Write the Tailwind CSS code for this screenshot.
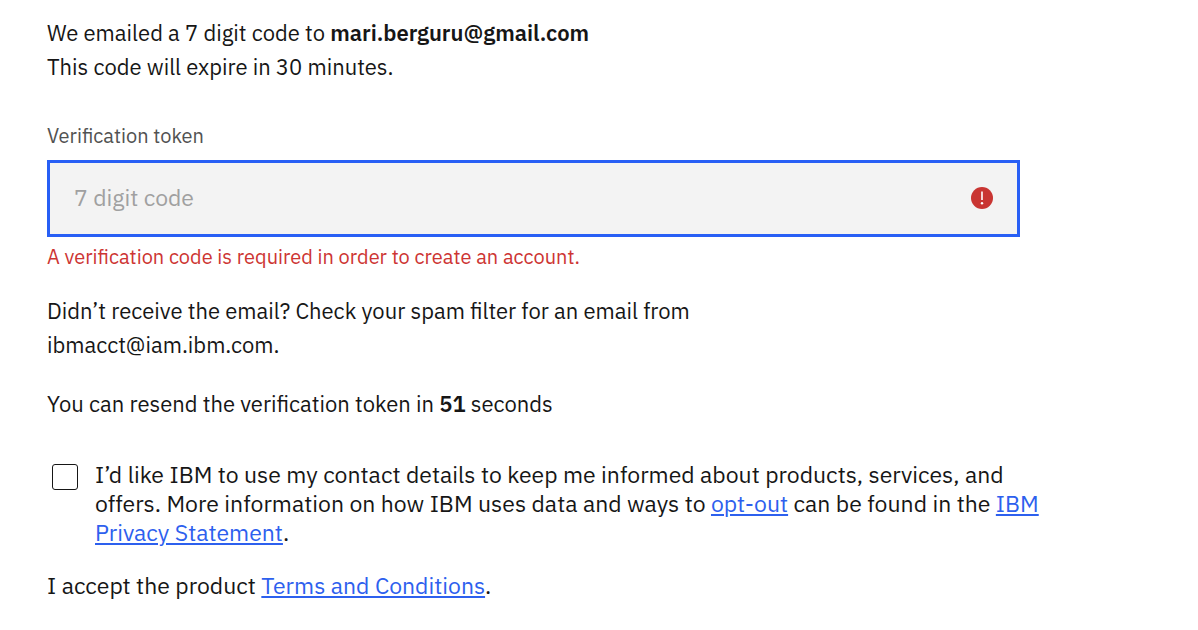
<!DOCTYPE html>
<html lang="en">
<head>
<meta charset="utf-8">
<title>Verify email</title>
<script src="https://cdn.jsdelivr.net/npm/@tailwindcss/browser@4"></script>
</head>
<body class="bg-white text-[#161616] font-['IBM_Plex_Sans','Noto_Sans',sans-serif] text-[22px]">
<main class="px-[47px] pt-4">
  <p class="leading-[34px]">We emailed a 7 digit code to <strong class="font-semibold">mari.berguru@gmail.com</strong><br>This code will expire in 30 minutes.</p>
  <form novalidate>
    <div class="mt-10 max-w-[973px]">
      <label for="token" class="block text-[20px] leading-6 text-[#525252]">Verification token</label>
      <div class="relative mt-3">
        <input id="token" type="text" placeholder="7 digit code" aria-invalid="true" aria-describedby="token-error" class="block h-[77px] w-full border-[3px] border-[#285ff5] bg-[#f3f3f3] px-6 pb-1 text-[23px] outline-none placeholder:text-[#a0a0a0]">
        <svg class="absolute top-[27px] right-[27px]" width="22" height="22" viewBox="0 0 22 22" aria-hidden="true"><circle cx="11" cy="11" r="11" fill="#c93532"/><path d="M11 4.5v8.5" stroke="#fff" stroke-width="1.6"/><circle cx="11" cy="16.3" r="1.2" fill="#fff"/></svg>
      </div>
      <p id="token-error" class="mt-2 text-[20px] leading-6 text-[#cd3533]">A verification code is required in order to create an account.</p>
    </div>
    <p class="mt-[25px] max-w-[720px] leading-[34px]">Didn’t receive the email? Check your spam filter for an email from ibmacct@iam.ibm.com.</p>
    <p class="mt-[25px] leading-[34px]">You can resend the verification token in <strong class="font-semibold">51</strong> seconds</p>
    <div class="mt-[39px] flex max-w-[1000px] gap-[17px] pl-[5px] text-[23px]">
      <input id="consent" type="checkbox" class="mt-1 size-[26px] shrink-0 appearance-none rounded-[3px] border border-[#161616]">
      <label for="consent" class="leading-[29px]">I’d like IBM to use my contact details to keep me informed about products, services, and offers. More information on how IBM uses data and ways to <a href="#" class="text-[#2d60ee] underline">opt-out</a> can be found in the <a href="#" class="text-[#2d60ee] underline">IBM Privacy Statement</a>.</label>
    </div>
    <p class="mt-6 text-[23px] leading-[29px]">I accept the product <a href="#" class="text-[#2d60ee] underline">Terms and Conditions</a>.</p>
  </form>
</main>
</body>
</html>
